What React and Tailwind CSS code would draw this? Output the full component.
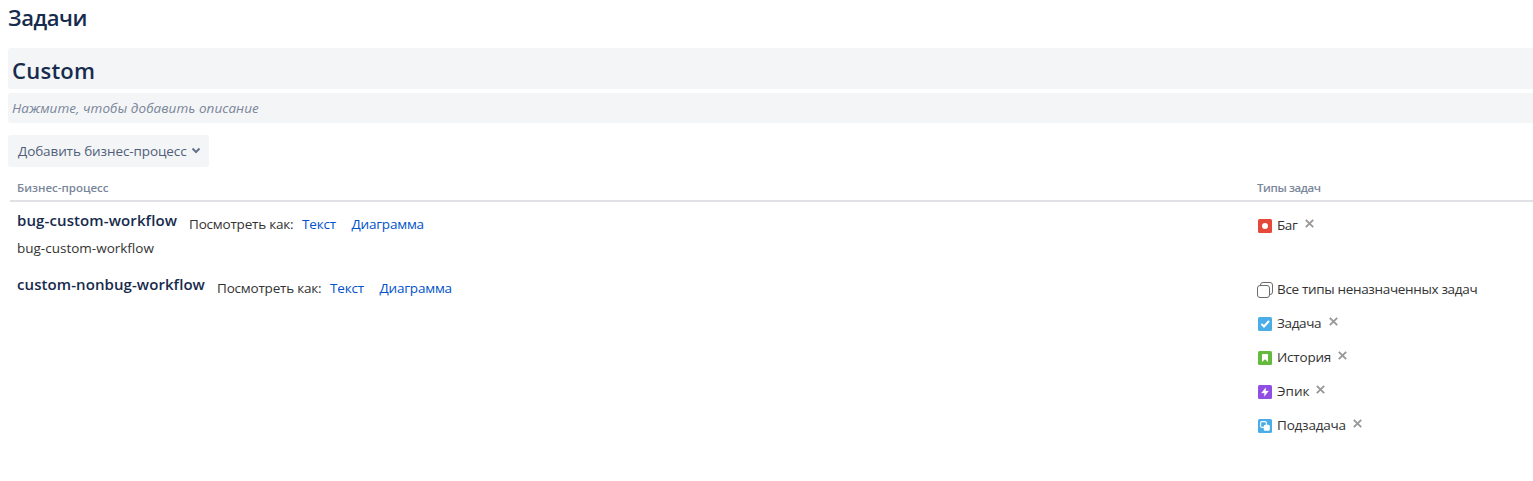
import React from "react";

const BugIcon = () => (
  <svg className="mt-0.5 block size-4" viewBox="0 0 16 16">
    <rect x="1" y="1" width="14" height="14" rx="1.5" fill="#e5493a" />
    <circle cx="8" cy="8" r="3" fill="#fff" />
  </svg>
);

const AllIcon = () => (
  <svg className="mt-0.5 block size-4" viewBox="0 0 16 16" fill="none" stroke="#6b6b6b">
    <rect x="0.5" y="3.5" width="12" height="12" rx="2.5" />
    <path d="M3.5 3.5V3a2.5 2.5 0 0 1 2.5-2.500h7a2.500 2.500 0 0 1 2.500 2.500v7a2.500 2.500 0 0 1-2.500 2.500h-.5" />
  </svg>
);

const TaskIcon = () => (
  <svg className="mt-0.5 block size-4" viewBox="0 0 16 16">
    <rect x="1" y="1" width="14" height="14" rx="1.5" fill="#4bade8" />
    <path d="M5 8.500l2 2L11.500 5.500" fill="none" stroke="#fff" strokeWidth="2" strokeLinecap="round" />
  </svg>
);

const StoryIcon = () => (
  <svg className="mt-0.5 block size-4" viewBox="0 0 16 16">
    <rect x="1" y="1" width="14" height="14" rx="1.5" fill="#63ba3c" />
    <path d="M5 5a1 1 0 0 1 1-1h4a1 1 0 0 1 1 1v7L8 9.200 5 12z" fill="#fff" />
  </svg>
);

const EpicIcon = () => (
  <svg className="mt-0.5 block size-4" viewBox="0 0 16 16">
    <rect x="1" y="1" width="14" height="14" rx="1.5" fill="#904ee2" />
    <path d="M8.600 3.800v3.200h2.900L7.400 12.300V9H4.500z" fill="#fff" stroke="#fff" strokeWidth=".3" strokeLinejoin="round" />
  </svg>
);

const SubtaskIcon = () => (
  <svg className="mt-0.5 block size-4" viewBox="0 0 16 16">
    <rect x="1" y="1" width="14" height="14" rx="1.5" fill="#4bade8" />
    <rect x="3.600" y="3.600" width="5.800" height="5.800" rx="1.5" fill="none" stroke="#fff" strokeWidth="1.1" />
    <rect x="6.800" y="6.800" width="6" height="6" rx="1.5" fill="#fff" />
  </svg>
);

const Remove = () => (
  <svg className="mb-1 block size-[9px]" viewBox="0 0 9 9" stroke="#999" strokeWidth="1.9">
    <path d="M.8.8l7.400 7.400M8.200.8L.8 8.200" />
  </svg>
);

function IssueType({ icon, label, width, removable = true }) {
  return (
    <div className="flex h-[34px] items-center">
      {icon}
      <span className={`ml-1 shrink-0 leading-5 ${width}`}>{label}</span>
      {removable && <Remove />}
    </div>
  );
}

function Workflow({ name, nameWidth, description }) {
  return (
    <div className="w-[1247px] shrink-0 pl-2">
      <div className="flex h-6 items-start">
        <h3 className={`shrink-0 text-[15px] leading-5 font-semibold text-[#172b4d] ${nameWidth}`}>{name}</h3>
        <span className="mt-1 w-[113px] shrink-0 leading-5 tracking-[-0.2px]">Посмотреть как:</span>
        <a className="mt-1 w-[49.500px] shrink-0 leading-5 tracking-[-0.15px] text-[#0052cc]">Текст</a>
        <a className="mt-1 leading-5 tracking-[-0.2px] text-[#0052cc]">Диаграмма</a>
      </div>
      {description && <p className="mt-1 leading-5">{description}</p>}
    </div>
  );
}

export default function App() {
  return (
    <main className="h-[481px] overflow-hidden bg-white pl-2 font-['Open_Sans','Noto_Sans',sans-serif] text-[13.5px] whitespace-nowrap text-[#333]">
      <h1 className="h-12 pt-[3px] text-[22px] leading-7 font-semibold tracking-[-0.4px] text-[#172b4d]">Задачи</h1>
      <h2 className="h-[41px] rounded-l-[3px] bg-[#f4f5f7] pt-[7px] pl-1 text-[22px] leading-[30px] font-semibold tracking-[0.25px] text-[#172b4d]">Custom</h2>
      <p className="mt-1 h-[30px] rounded-l-[3px] bg-[#f4f5f7] pt-[5px] pl-1 leading-5 tracking-[0.06px] text-[#7a869a] italic">Нажмите, чтобы добавить описание</p>
      <button className="mt-3 flex h-8 w-[201px] items-center rounded-[3px] bg-[#f4f5f7] pl-2.5 text-[#505f79]">
        <span className="w-[173px] shrink-0 text-left tracking-[-0.1px]">Добавить бизнес-процесс</span>
        <svg className="block h-2 w-2.5" viewBox="0 0 10 8" fill="none" stroke="#65738c" strokeWidth="2">
          <path d="M1.500 1.500L5 5l3.500-3.500" />
        </svg>
      </button>
      <section className="ml-0.5">
        <div className="flex h-[35px] border-b-2 border-[#dfe1e6] pt-[13px] text-[11.5px] leading-4 font-semibold text-[#7a869a]">
          <span className="w-[1247px] shrink-0 pl-[7px]">Бизнес-процесс</span>
          <span className="tracking-[-0.4px]">Типы задач</span>
        </div>
        <div className="-ml-px flex h-[70px]">
          <div className="pt-2">
            <Workflow name="bug-custom-workflow" nameWidth="w-[172px] tracking-[0.11px]" description="bug-custom-workflow" />
          </div>
          <div className="pt-1.5 pl-px">
            <IssueType icon={<BugIcon />} label="Баг" width="w-7 tracking-[-0.4px]" />
          </div>
        </div>
        <div className="-ml-px flex">
          <div className="pt-0.5">
            <Workflow name="custom-nonbug-workflow" nameWidth="w-[200px] tracking-[0.08px]" />
          </div>
          <div className="pl-px">
            <IssueType icon={<AllIcon />} label="Все типы неназначенных задач" width="w-[210px] tracking-[-0.33px]" removable={false} />
            <IssueType icon={<TaskIcon />} label="Задача" width="w-[52px] tracking-[-0.35px]" />
            <IssueType icon={<StoryIcon />} label="История" width="w-[61px] tracking-[-0.2px]" />
            <IssueType icon={<EpicIcon />} label="Эпик" width="w-[39px]" />
            <IssueType icon={<SubtaskIcon />} label="Подзадача" width="w-[76px] tracking-[-0.2px]" />
          </div>
        </div>
      </section>
    </main>
  );
}
